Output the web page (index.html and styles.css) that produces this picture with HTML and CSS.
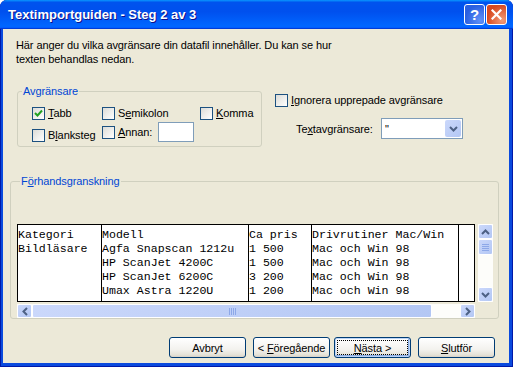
FILE: index.html
```html
<!DOCTYPE html>
<html lang="sv">
<head>
  <meta charset="UTF-8" />
  <title>Textimportguiden - Steg 2 av 3</title>
  <link rel="stylesheet" href="styles.css">
</head>
<body>
  <div class="window">
    <div class="titlebar">
      <span class="title">Textimportguiden - Steg 2 av 3</span>
      <div class="caption-buttons">
        <span class="cap-btn help">?</span>
        <span class="cap-btn close">
          <svg width="11" height="11" viewBox="0 0 11 11"><path d="M1.5 1.5l8 8M9.5 1.5l-8 8" stroke="#fff" stroke-width="2.2" stroke-linecap="square"/></svg>
        </span>
      </div>
    </div>

    <div class="client">
      <p class="intro">Här anger du vilka avgränsare din datafil innehåller. Du kan se hur<br>texten behandlas nedan.</p>

      <div class="options">
        <fieldset class="group delims">
          <legend>Avgränsare</legend>
          <div class="delim-grid">
            <label class="check"><span class="box checked"><svg width="11" height="11" viewBox="0 0 11 11"><path d="M2 5l2.5 2.5L9 2.5" fill="none" stroke="#21a121" stroke-width="2"/></svg></span><span><u>T</u>abb</span></label>
            <label class="check"><span class="box"></span><span>S<u>e</u>mikolon</span></label>
            <label class="check"><span class="box"></span><span><u>K</u>omma</span></label>
            <label class="check"><span class="box"></span><span>B<u>l</u>anksteg</span></label>
            <label class="check other"><span class="box"></span><span><u>A</u>nnan:</span><span class="text-input"></span></label>
          </div>
        </fieldset>

        <div class="side">
          <label class="check"><span class="box"></span><span><u>I</u>gnorera upprepade avgränsare</span></label>
          <div class="qualifier">
            <span class="qualifier-label">Te<u>x</u>tavgränsare:</span>
            <div class="combo">
              <span class="combo-value">"</span>
              <span class="combo-drop"><svg width="9" height="6" viewBox="0 0 9 6"><path d="M1 1l3.5 3.5L8 1" fill="none" stroke="#4d6185" stroke-width="2"/></svg></span>
            </div>
          </div>
        </div>
      </div>

      <fieldset class="group preview">
        <legend>F<u>ö</u>rhandsgranskning</legend>
        <div class="data-area">
          <div class="sheet">
            <div class="col c1"><div>Kategori</div><div>Bildläsare</div></div>
            <div class="col c2"><div>Modell</div><div>Agfa Snapscan 1212u</div><div>HP ScanJet 4200C</div><div>HP ScanJet 6200C</div><div>Umax Astra 1220U</div></div>
            <div class="col c3"><div>Ca pris</div><div>1 500</div><div>1 500</div><div>3 200</div><div>1 200</div></div>
            <div class="col c4"><div>Drivrutiner Mac/Win</div><div>Mac och Win 98</div><div>Mac och Win 98</div><div>Mac och Win 98</div><div>Mac och Win 98</div></div>
            <div class="col c5"></div>
          </div>
          <div class="vscroll">
            <span class="sb-btn"><svg width="9" height="6" viewBox="0 0 9 6"><path d="M1 5l3.5-3.5L8 5" fill="none" stroke="#4d6185" stroke-width="2"/></svg></span>
            <span class="sb-thumb v"><i></i><i></i><i></i><i></i></span>
            <span class="sb-track"></span>
            <span class="sb-btn"><svg width="9" height="6" viewBox="0 0 9 6"><path d="M1 1l3.5 3.5L8 1" fill="none" stroke="#4d6185" stroke-width="2"/></svg></span>
          </div>
        </div>
        <div class="hscroll">
          <span class="sb-btn"><svg width="6" height="9" viewBox="0 0 6 9"><path d="M5 1L1.5 4.5 5 8" fill="none" stroke="#4d6185" stroke-width="2"/></svg></span>
          <span class="sb-thumb h"><i></i><i></i><i></i><i></i></span>
          <span class="sb-track"></span>
          <span class="sb-btn"><svg width="6" height="9" viewBox="0 0 6 9"><path d="M1 1l3.5 3.5L1 8" fill="none" stroke="#4d6185" stroke-width="2"/></svg></span>
        </div>
      </fieldset>

      <div class="buttons">
        <button class="btn">Avbryt</button>
        <button class="btn back">&lt; <u>F</u>öregående</button>
        <button class="btn next default"><u>N</u>ästa &gt;</button>
        <button class="btn finish"><u>S</u>lutför</button>
      </div>
    </div>
  </div>
</body>
</html>
```

FILE: styles.css
```css
* {
  box-sizing: border-box;
}

body {
  margin: 0;
  background: #fff;
  font: 11px "Liberation Sans", Arial, sans-serif;
  letter-spacing: -0.1px;
  color: #000;
}

.window {
  width: 513px;
  height: 367px;
  display: flex;
  flex-direction: column;
  background: #0a4ade;
  border-radius: 7px 7px 0 0;
  box-shadow: inset 1px 0 #0019a8, inset -1px 0 #0019a8, inset 0 -1px #0019a8;
}

/* title bar */
.titlebar {
  height: 29px;
  display: flex;
  align-items: center;
  padding-left: 8px;
  border-radius: 7px 7px 0 0;
  background: linear-gradient(180deg, #0997ff, #0053ee 8%, #0050ee 40%, #06f 88%, #06f 93%, #005bff 95%, #003dd7 96%, #003dd7);
}

.title {
  flex: 1;
  color: #fff;
  font: bold 13px "Liberation Sans", Arial, sans-serif;
  letter-spacing: 0;
  text-shadow: 1px 1px #0f1089;
}

.caption-buttons {
  display: flex;
  gap: 1px;
  margin-right: 6px;
}

.cap-btn {
  width: 21px;
  height: 21px;
  border: 1px solid #fff;
  border-radius: 3px;
  display: flex;
  align-items: center;
  justify-content: center;
}

.help {
  background: radial-gradient(circle at 80% 80%, #5f91f8, #2a5fe0 70%);
  color: #fff;
  font: bold 15px "Liberation Sans", Arial, sans-serif;
}

.close {
  background: radial-gradient(circle at 80% 80%, #f29c78, #d8491f 70%);
}

/* dialog body */
.client {
  flex: 1;
  margin: 0 4px 4px 3px;
  background: #ece9d8;
}

.intro {
  margin: 9px 0 0 13px;
  line-height: 14px;
}

.options {
  display: flex;
  margin: 18px 0 0 14px;
}

.group {
  margin: 0;
  padding: 0;
  border: 1px solid #d0d0bf;
  border-radius: 3px;
}

.group legend {
  padding: 0 1px;
  line-height: 14px;
  color: #0046d5;
}

.delims {
  width: 245px;
  padding-bottom: 4px;
}

.delims legend {
  margin-left: 4px;
}

.delim-grid {
  display: grid;
  grid-template-columns: 70px 98px auto;
  grid-auto-rows: 20px;
  row-gap: 2px;
  align-items: end;
  padding: 2px 0 0 14px;
}

.check {
  display: flex;
  align-items: center;
  height: 14px;
  white-space: nowrap;
}

.box {
  width: 13px;
  height: 13px;
  margin-right: 3px;
  border: 1px solid #1c5180;
  background: linear-gradient(135deg, #dcdcd7, #fff);
  display: flex;
  flex: none;
}

.other {
  height: 20px;
}

.text-input {
  width: 36px;
  height: 20px;
  margin-left: 6px;
  border: 1px solid #7f9db9;
  background: #fff;
}

.side {
  margin-left: 13px;
  padding-top: 9px;
}

.qualifier {
  display: flex;
  align-items: center;
  margin: 11px 0 0 21px;
}

.qualifier-label {
  width: 85px;
}

.combo {
  width: 82px;
  height: 21px;
  display: flex;
  align-items: center;
  padding: 1px;
  border: 1px solid #7f9db9;
  background: #fff;
}

.combo-value {
  flex: 1;
  padding-left: 2px;
}

.combo-drop {
  width: 16px;
  height: 17px;
  display: flex;
  align-items: center;
  justify-content: center;
  border-radius: 2px;
  background: linear-gradient(135deg, #cbd8fb, #b3c7f4);
}

/* preview */
.preview {
  width: 489px;
  margin: 27px 0 0 7px;
  padding: 36px 5px 0 6px;
}

.preview legend {
  margin-left: 3px;
}

.data-area {
  display: flex;
  gap: 3px;
}

.sheet {
  width: 458px;
  height: 78px;
  display: flex;
  border: 1px solid #000;
  background: #fff;
  font: 11.6px "Liberation Mono", "Courier New", monospace;
  letter-spacing: 0;
  line-height: 14px;
}

.col {
  padding: 3px 0;
  border-right: 1px solid #000;
  white-space: pre;
  overflow: hidden;
}

.c1 { width: 84px; }
.c2 { width: 147px; }
.c3 { width: 63px; }
.c4 { width: 147px; }
.c5 { flex: 1; border-right: 0; }

.vscroll {
  width: 15px;
  height: 78px;
  display: flex;
  flex-direction: column;
  background: #fdfdfa;
}

.hscroll {
  width: 458px;
  height: 14px;
  margin-top: 2px;
  display: flex;
  background: #fdfdfa;
}

.sb-btn,
.sb-thumb {
  display: flex;
  align-items: center;
  justify-content: center;
  border: 1px solid #fff;
  border-radius: 2px;
  background: linear-gradient(135deg, #cbd8fb, #b3c7f4);
}

.vscroll .sb-btn {
  height: 15px;
}

.hscroll .sb-btn {
  width: 15px;
}

.sb-track {
  flex: 1;
}

.sb-thumb.v {
  height: 16px;
  flex-direction: column;
  gap: 1px;
}

.sb-thumb.v i {
  width: 7px;
  height: 1px;
  background: #8da8e8;
}

.sb-thumb.h {
  width: 400px;
  gap: 1px;
}

.sb-thumb.h i {
  width: 1px;
  height: 7px;
  background: #8da8e8;
}

/* wizard buttons */
.buttons {
  display: flex;
  justify-content: flex-end;
  margin: 18px 14px 0 0;
}

.btn {
  width: 77px;
  height: 21px;
  padding: 0;
  border: 1px solid #003c74;
  border-radius: 3px;
  background: linear-gradient(180deg, #fff, #f3f2ee 60%, #e4e1d6 90%, #d6d0c5);
  font: 11px "Liberation Sans", Arial, sans-serif;
  letter-spacing: -0.1px;
  color: #000;
}

.back,
.finish {
  margin-left: 7px;
}

.next {
  margin-left: 4px;
}

.default {
  box-shadow: inset 0 0 0 1px #bcd4f6, inset -1px -1px 0 1px #89ade4;
  outline: 1px dotted #000;
  outline-offset: -4px;
}
```
